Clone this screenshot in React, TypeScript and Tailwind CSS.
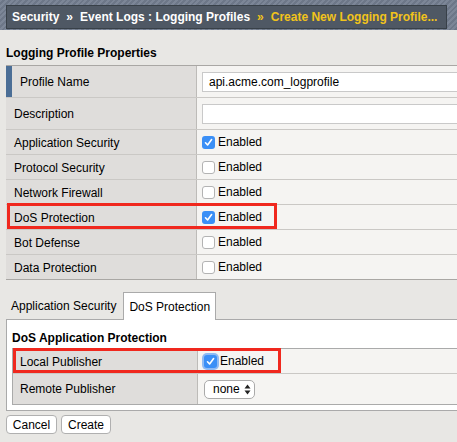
import React from "react";

const Check = ({ on, glow }: { on?: boolean; glow?: boolean }) =>
  on ? (
    <span
      className={`w-[13px] h-[13px] rounded-[3px] bg-[#3b8ff6] flex items-center justify-center shrink-0 ${
        glow ? "shadow-[0_0_0_2px_#8fbaf3]" : ""
      }`}
    >
      <svg width="9" height="9" viewBox="0 0 9 9">
        <path d="M1.5 4.8 L3.6 7 L7.6 1.6" stroke="#fff" strokeWidth="1.6" fill="none" strokeLinecap="round" strokeLinejoin="round" />
      </svg>
    </span>
  ) : (
    <span className="w-[13px] h-[13px] rounded-[3px] bg-white border border-[#b3b3b3] shrink-0" />
  );

const Row = ({
  label,
  tall,
  marker,
  children,
  box,
  last,
}: {
  label: string;
  tall?: boolean;
  marker?: boolean;
  children: React.ReactNode;
  box?: boolean;
  last?: boolean;
}) => (
  <div
    className={`relative flex border-b ${last ? "border-[#a9a7a4]" : "border-[#cac8c5]"} ${
      tall ? "h-[32px]" : "h-[25px]"
    }`}
  >
    <div className="w-[191px] shrink-0 flex bg-[#dfdddb] border-r border-[#bdbbb8]">
      {marker && <div className="w-[6px] bg-[#4b6e96]" />}
      <div className="pl-[8px] pt-[1px] flex items-center">{label}</div>
    </div>
    <div className="flex-1 min-w-0 bg-[#f5f4f2] pl-[5px] flex items-center">{children}</div>
    {box && (
      <div className="absolute top-[-2px] left-[1px] w-[270px] h-[26px] border-[3px] border-[#f0281e]" />
    )}
  </div>
);

const Enabled = ({ on }: { on?: boolean }) => (
  <div className="flex items-center gap-[3px]">
    <Check on={on} />
    <span>Enabled</span>
  </div>
);

export default function App() {
  return (
    <div className="w-[457px] h-[442px] overflow-hidden bg-[#e8e7e4] text-[12px] text-black font-['Liberation_Sans',Arial,sans-serif]">
      {/* Breadcrumb */}
      <div className="h-[30px] pt-[5px] pl-[6px] pr-[10px] bg-[repeating-linear-gradient(135deg,#7c8697_0px,#7c8697_2px,#6d7788_2px,#6d7788_4px)]">
        <div className="h-[24px] bg-[#4f5864] border border-[#384048] flex items-center pl-[5px] font-bold text-white whitespace-nowrap overflow-hidden">
          <span>Security</span>
          <span className="mx-[7px]">»</span>
          <span>Event Logs : Logging Profiles</span>
          <span className="mx-[7px] text-[#f2c31b]">»</span>
          <span className="text-[#f2c31b]">Create New Logging Profile...</span>
        </div>
      </div>

      <div className="pl-[6px] pt-[16px] pb-[5px] font-bold leading-[14px]">Logging Profile Properties</div>

      {/* Properties table */}
      <div className="ml-[6px] border-t border-[#a9a7a4]">
        <Row label="Profile Name" tall marker>
          <div className="w-[270px] shrink-0 h-[20px] bg-white border border-[#c9c9c9] pl-[6px] flex items-center">
            api.acme.com_logprofile
          </div>
        </Row>
        <Row label="Description" tall>
          <div className="w-[270px] shrink-0 h-[20px] bg-white border border-[#c9c9c9]" />
        </Row>
        <Row label="Application Security">
          <Enabled on />
        </Row>
        <Row label="Protocol Security">
          <Enabled />
        </Row>
        <Row label="Network Firewall">
          <Enabled />
        </Row>
        <Row label="DoS Protection" box>
          <Enabled on />
        </Row>
        <Row label="Bot Defense">
          <Enabled />
        </Row>
        <Row label="Data Protection" last>
          <Enabled />
        </Row>
      </div>

      {/* Tabs */}
      <div className="ml-[6px] mt-[11px] flex items-end h-[28px]">
        <div className="h-[27px] pl-[5px] pr-[6px] flex items-center">Application Security</div>
        <div className="relative top-px h-[28px] ml-[1px] px-[5px] flex items-center bg-white border border-b-0 border-[#aaa]">
          DoS Protection
        </div>
      </div>
      <div className="ml-[6px] w-[460px] h-[92px] bg-white border border-[#aaa] pt-[11px]">
        <div className="pl-[5px] font-bold leading-[14px]">DoS Application Protection</div>
        <div className="mt-[3px] ml-[5px] border-t border-l border-b border-[#aaa]">
          <div className="relative flex h-[25px] border-b border-[#cac8c5]">
            <div className="w-[185px] shrink-0 bg-[#dfdddb] border-r border-[#bdbbb8] pl-[7px] pt-[1px] flex items-center">
              Local Publisher
            </div>
            <div className="flex-1 bg-[#f5f4f2] pl-[6px] flex items-center gap-[3px]">
              <Check on glow />
              <span>Enabled</span>
            </div>
            <div className="absolute top-[-1px] left-0 w-[268px] h-[25px] border-[3px] border-[#f0281e]" />
          </div>
          <div className="flex h-[30px]">
            <div className="w-[185px] shrink-0 bg-[#dfdddb] border-r border-[#bdbbb8] pl-[7px] flex items-center">
              Remote Publisher
            </div>
            <div className="flex-1 bg-[#f5f4f2] pl-[6px] flex items-center">
              <div className="w-[51px] h-[19px] bg-white border border-[#aaa] rounded-[5px] flex items-center pl-[8px] gap-[4px]">
                <span>none</span>
                <svg width="7" height="11" viewBox="0 0 7 11">
                  <path d="M3.5 0.5 L6.5 4.5 L0.5 4.5 Z M0.5 6.5 L6.5 6.5 L3.5 10.5 Z" fill="#222" />
                </svg>
              </div>
            </div>
          </div>
        </div>
      </div>

      {/* Buttons */}
      <div className="ml-[6px] mt-[4px] flex gap-[4px]">
        <button className="w-[51px] h-[19px] bg-white border border-[#b0b0b0] rounded-[4px] text-[12px] leading-none">
          Cancel
        </button>
        <button className="w-[50px] h-[19px] bg-white border border-[#b0b0b0] rounded-[4px] text-[12px] leading-none">
          Create
        </button>
      </div>
    </div>
  );
}
